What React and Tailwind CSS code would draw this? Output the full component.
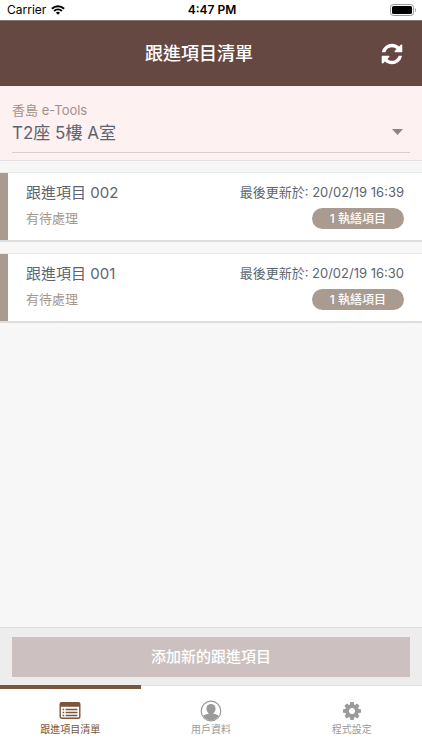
import { useState } from "react";

const tickets = [
	{ id: "002", status: "有待處理", updated: "20/02/19 16:39", count: 1 },
	{ id: "001", status: "有待處理", updated: "20/02/19 16:30", count: 1 },
];

const tabs = [
	{ key: "list", label: "跟進項目清單", Icon: ListIcon },
	{ key: "user", label: "用戶資料", Icon: UserIcon },
	{ key: "settings", label: "程式設定", Icon: CogIcon },
];

function WifiIcon() {
	return (
		<svg width="14" height="10" viewBox="0 0 14 10" fill="none" stroke="#000" strokeWidth="1.9" aria-hidden="true">
			<path d="M.9 3.7a8.7 8.7 0 0 1 12.2 0" />
			<path d="M3.1 6a5.6 5.6 0 0 1 7.8 0" />
			<path d="M7 9.8 4.9 7.7a3 3 0 0 1 4.2 0z" fill="#000" stroke="none" />
		</svg>
	);
}

function BatteryIcon() {
	return (
		<svg width="27" height="12" viewBox="0 0 27 12" aria-hidden="true">
			<rect x=".5" y=".5" width="23" height="11" rx="2.8" fill="none" stroke="#999" />
			<rect x="2" y="2" width="20" height="8" rx="1.5" fill="#000" />
			<path d="M25 4c1.4.5 1.4 3.5 0 4z" fill="#999" />
		</svg>
	);
}

function RefreshIcon() {
	return (
		<svg width="24" height="24" viewBox="0 0 1792 1792" fill="currentColor" aria-hidden="true">
			<path d="M1639 1056q0 5-1 7-64 268-268 434.5t-478 166.5q-146 0-282.5-55t-243.5-157l-129 129q-19 19-45 19t-45-19-19-45v-448q0-26 19-45t45-19h448q26 0 45 19t19 45-19 45l-137 137q71 66 161 102t187 36q134 0 250-65t186-179q11-17 53-117 8-23 30-23h192q13 0 22.5 9.5t9.5 22.5zm25-800v448q0 26-19 45t-45 19h-448q-26 0-45-19t-19-45 19-45l138-138q-148-137-349-137-134 0-250 65t-186 179q-11 17-53 117-8 23-30 23h-199q-13 0-22.5-9.5t-9.5-22.5v-7q65-268 270-434.5t480-166.5q146 0 284 55.5t245 156.5l130-129q19-19 45-19t45 19 19 45z" />
		</svg>
	);
}

function ListIcon() {
	return (
		<svg width="22" height="22" viewBox="0 0 22 22" fill="none" aria-hidden="true">
			<rect x="1.2" y="2.7" width="19.6" height="15.6" rx="1.8" stroke="currentColor" strokeWidth="1.4" />
			<path d="M1 6.8V4a2 2 0 0 1 2-2h16a2 2 0 0 1 2 2v2.8z" fill="currentColor" />
			<path d="M3.6 9.5h1.6M3.6 12.5h1.6M3.6 15.5h1.6M6.6 9.5h11.8M6.6 12.5h11.8M6.6 15.5h11.8" stroke="currentColor" strokeWidth="1.3" />
		</svg>
	);
}

function UserIcon() {
	return (
		<svg width="22" height="22" viewBox="0 0 22 22" fill="none" aria-hidden="true">
			<circle cx="11" cy="11" r="9.8" stroke="currentColor" strokeWidth="1.2" />
			<ellipse cx="11" cy="8.8" rx="4.6" ry="4.9" fill="currentColor" />
			<path d="M8.6 12.2h4.8v1.6c1.7.5 4.300.6 5.400 2a9.100 9.100 0 0 1-15.600 0c1.100-1.400 3.700-1.500 5.400-2z" fill="currentColor" />
		</svg>
	);
}

function CogIcon() {
	return (
		<svg width="22" height="22" viewBox="-40 -40 1872 1872" fill="currentColor" aria-hidden="true">
			<path d="M1152 896q0-106-75-181t-181-75-181 75-75 181 75 181 181 75 181-75 75-181zm512-109v222q0 12-8 23t-20 13l-185 28q-19 54-39 91 35 50 107 138 10 12 10 25t-9 23q-27 37-99 108t-94 71q-12 0-26-9l-138-108q-44 23-91 38-16 136-29 186-7 28-36 28h-222q-14 0-24.500-8.500t-11.500-21.500l-28-184q-49-16-90-37l-141 107q-10 9-25 9-14 0-25-11-126-114-165-168-7-10-7-23 0-12 8-23 15-21 51-66.500t54-70.500q-27-50-41-99l-183-27q-13-2-21-12.500t-8-23.500v-222q0-12 8-23t19-13l186-28q14-46 39-92-40-57-107-138-10-12-10-24 0-10 9-23 26-36 98.500-107.500t94.500-71.500q13 0 26 10l138 107q44-23 91-38 16-136 29-186 7-28 36-28h222q14 0 24.500 8.500t11.500 21.500l28 184q49 16 90 37l142-107q9-9 24-9 13 0 25 10 129 119 165 170 7 8 7 22 0 12-8 23-15 21-51 66.500t-54 70.500q26 50 41 98l183 28q13 2 21 12.500t8 23.500z" />
		</svg>
	);
}

function TicketCard({ ticket }) {
	return (
		<li>
			<a
				href={`#ticket-${ticket.id}`}
				className="flex justify-between border-t border-b-2 border-t-[#e8e8e8] border-b-[#dedede] bg-white"
			>
				<div className="flex">
					<div className="w-2 bg-[#a99b90]" />
					<div className="px-[18px] pt-2 pb-3">
						<h2 className="text-[15px] leading-6 text-[#5d6470]">跟進項目 {ticket.id}</h2>
						<p className="mt-[3px] text-[13px] leading-5 text-[#a6988c]">{ticket.status}</p>
					</div>
				</div>
				<div className="flex flex-col items-end pt-[7px] pr-[18px]">
					<p className="text-[13px] leading-6 text-[#5d6470]">最後更新於: {ticket.updated}</p>
					<span className="mt-1 rounded-full bg-[#a99b90] px-[18px] text-[12px] leading-[21px] font-medium text-white">
						{ticket.count} 執繕項目
					</span>
				</div>
			</a>
		</li>
	);
}

export default function App() {
	const [activeTab, setActiveTab] = useState("list");

	return (
		<div className="flex min-h-screen flex-col bg-[#f7f7f7] font-['Inter','Noto_Sans_CJK_TC',sans-serif]">
			<div className="grid h-5 grid-cols-3 items-center bg-white pr-[5px] pl-[7px] text-[12px] text-black">
				<div className="flex items-center gap-[5px]">
					<span>Carrier</span>
					<WifiIcon />
				</div>
				<span className="text-center font-semibold">4:47 PM</span>
				<div className="flex justify-end">
					<BatteryIcon />
				</div>
			</div>

			<header className="flex h-[66px] items-center border-t border-t-[#8a726e] bg-[#664843] px-[18px] text-white">
				<h1 className="flex-1 text-center text-[18px] font-medium">跟進項目清單</h1>
				<button type="button" aria-label="重新整理">
					<RefreshIcon />
				</button>
			</header>

			<section className="border-b border-[#e6e0e2] bg-[#fdf1f1] px-3 pt-[14px] pb-[7px]">
				<label htmlFor="unit" className="block text-[13px] leading-5 text-[#a58f8c]">
					香島 e-Tools
				</label>
				<div className="relative border-b border-[#dacfd0] pb-1">
					<select id="unit" className="block h-7 w-full appearance-none bg-transparent text-[17px] text-[#5d6470]">
						<option>T2座 5樓 A室</option>
					</select>
					<svg className="pointer-events-none absolute top-[9px] right-[7px]" width="11" height="6" viewBox="0 0 11 6" aria-hidden="true">
						<path d="M0 0h11L5.5 6z" fill="#968180" />
					</svg>
				</div>
			</section>

			<main className="flex-1 py-[11px]">
				<ul className="space-y-[11px]">
					{tickets.map((ticket) => (
						<TicketCard key={ticket.id} ticket={ticket} />
					))}
				</ul>
			</main>

			<div className="border-t border-[#dfdfe1] bg-[#ededed] px-3 pt-[9px] pb-2">
				<button type="button" className="h-10 w-full bg-[#ccc1c0] text-[15px] font-medium text-white">
					添加新的跟進項目
				</button>
			</div>

			<nav className="grid grid-cols-3 bg-white">
				{tabs.map(({ key, label, Icon }) => (
					<button
						key={key}
						type="button"
						onClick={() => setActiveTab(key)}
						className={
							activeTab === key
								? "flex h-[65px] flex-col items-center border-t-4 border-[#7a5539] pt-[11px] text-[#7a5539]"
								: "flex h-[65px] flex-col items-center border-t border-[#e0e0e0] pt-[14px] text-[#9a9a9a]"
						}
					>
						<Icon />
						<span className="text-[10px] leading-[14px]">{label}</span>
					</button>
				))}
			</nav>
		</div>
	);
}
